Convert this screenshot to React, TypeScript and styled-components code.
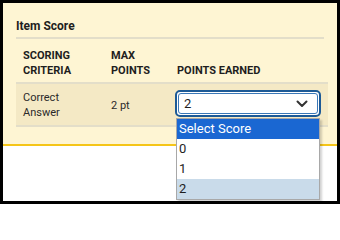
import React from "react";
import styled, { createGlobalStyle } from "styled-components";

const Global = createGlobalStyle`
  html, body { margin: 0; padding: 0; background: #ffffff; }
  body { font-family: Roboto, "Noto Sans", Arial, sans-serif; }
  * { box-sizing: border-box; }
`;

const Frame = styled.div`
  width: 340px;
  height: 204px;
  border: 3px solid #000;
  background: #fff;
  overflow: hidden;
  position: relative;
`;

const Panel = styled.section`
  background: #fef5d3;
  border-bottom: 2px solid #f5c518;
  padding: 14px 13px 17px 13px;
`;

const Title = styled.h2`
  margin: 0;
  font-size: 12px;
  line-height: 18px;
  font-weight: 700;
  color: #1e1e1e;
  padding-bottom: 2px;
  border-bottom: 2px solid #e3dec9;
`;

const Table = styled.div`
  display: grid;
  grid-template-columns: 88px 66px 1fr;
  margin-top: 9px;
`;

const HeadCell = styled.div`
  font-size: 11px;
  line-height: 15px;
  font-weight: 700;
  color: #1e1e1e;
  text-transform: uppercase;
  padding: 0 7px 4px 7px;
  display: flex;
  align-items: flex-end;
  border-bottom: 2px solid #e3dec9;
`;

const Cell = styled.div<{ $pl?: number }>`
  background: #f4e9c5;
  font-size: 11px;
  line-height: 15px;
  color: #2a2a2a;
  padding: 6px 7px 5px ${(p) => p.$pl ?? 7}px;
  display: flex;
  align-items: center;
  border-bottom: 2px solid #e3dec9;
  min-height: 40px;
  position: relative;
`;

const SelectCell = styled(Cell)`
  padding-top: 6px;
  padding-bottom: 5px;
  align-items: flex-start;
`;

const SelectBox = styled.div`
  width: 146px;
  height: 27px;
  border: 2px solid #1d5a96;
  border-radius: 5px;
  padding: 1px;
  background: #fff;
`;

const SelectInner = styled.div`
  height: 100%;
  border: 1px solid #3a78b8;
  border-radius: 3px;
  display: flex;
  align-items: center;
  justify-content: space-between;
  padding: 0 9px 0 5px;
  font-size: 13px;
  color: #1e1e1e;
`;

const Menu = styled.ul`
  position: absolute;
  left: 6px;
  top: 34px;
  width: 144px;
  margin: 0;
  padding: 0;
  list-style: none;
  background: #fff;
  border: 1px solid #a8a8a8;
  box-shadow: 2px 2px 2px rgba(0, 0, 0, 0.18);
  z-index: 2;
`;

const Option = styled.li<{ $state?: "active" | "chosen" }>`
  height: 20px;
  line-height: 20px;
  padding-left: 2px;
  font-size: 13px;
  color: ${(p) => (p.$state === "active" ? "#fff" : "#1e1e1e")};
  background: ${(p) =>
    p.$state === "active" ? "#1a67d2" : p.$state === "chosen" ? "#c9dbea" : "#fff"};
`;

const Chevron = () => (
  <svg width="12" height="8" viewBox="0 0 12 8" fill="none">
    <path d="M1.5 1.5 L6 6 L10.5 1.5" stroke="#333" strokeWidth="2" strokeLinecap="round" strokeLinejoin="round" />
  </svg>
);

export default function App() {
  return (
    <>
      <Global />
      <Frame>
        <Panel>
          <Title>Item Score</Title>
          <Table>
            <HeadCell>Scoring<br />Criteria</HeadCell>
            <HeadCell>Max<br />Points</HeadCell>
            <HeadCell>Points Earned</HeadCell>
            <Cell>Correct<br />Answer</Cell>
            <Cell>2 pt</Cell>
            <SelectCell $pl={5}>
              <SelectBox>
                <SelectInner>
                  <span>2</span>
                  <Chevron />
                </SelectInner>
              </SelectBox>
              <Menu>
                <Option $state="active">Select Score</Option>
                <Option>0</Option>
                <Option>1</Option>
                <Option $state="chosen">2</Option>
              </Menu>
            </SelectCell>
          </Table>
        </Panel>
      </Frame>
    </>
  );
}
